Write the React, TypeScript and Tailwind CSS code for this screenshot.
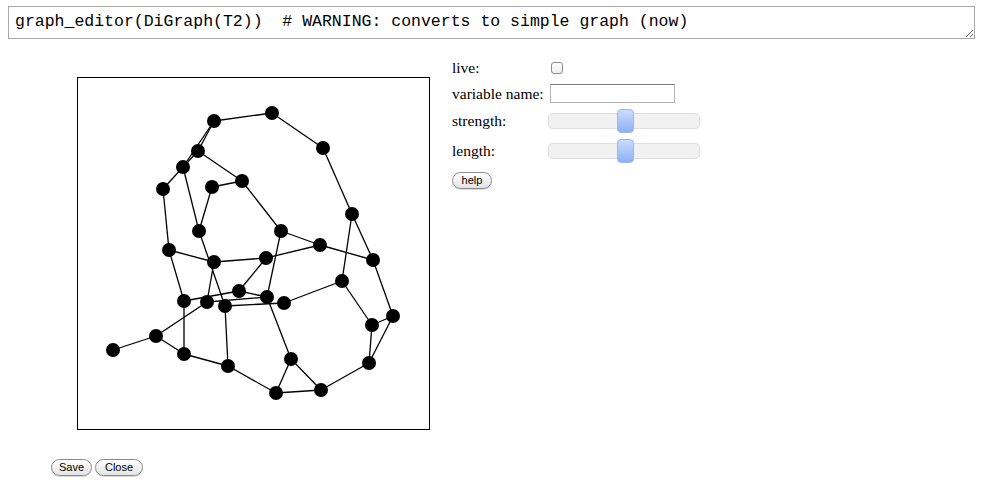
import React from 'react';

type Pt = [number, number];

const nodes: Record<string, Pt> = {
  A: [214, 121], B: [272, 113], C: [323, 148], D: [198, 151], E: [183, 167],
  F: [163, 189], G: [212, 187], H: [242, 181], I: [199, 231], J: [281, 231],
  K: [352, 214], L: [169, 250], M: [214, 262], N: [266, 258], O: [320, 245],
  P: [373, 260], Q: [342, 281], R: [239, 291], S: [184, 301], T: [207, 302],
  U: [225, 306], V: [267, 297], W: [284, 303], X: [393, 316], Y: [372, 325],
  Z: [156, 336], AA: [113, 350], AB: [184, 354], AC: [228, 366], AD: [291, 359],
  AE: [369, 363], AF: [321, 390], AG: [276, 393],
};

const edges: [string, string][] = [
  ['A', 'B'], ['B', 'C'], ['C', 'K'], ['K', 'P'], ['K', 'Q'], ['A', 'D'], ['A', 'E'],
  ['D', 'E'], ['E', 'F'], ['D', 'H'], ['E', 'I'], ['G', 'H'], ['G', 'I'], ['H', 'J'],
  ['J', 'O'], ['J', 'V'], ['O', 'P'], ['N', 'O'], ['F', 'L'], ['L', 'M'], ['L', 'S'],
  ['I', 'U'], ['M', 'T'], ['M', 'N'], ['N', 'R'], ['R', 'V'], ['S', 'R'], ['T', 'V'],
  ['U', 'W'], ['W', 'Q'], ['Q', 'Y'], ['Y', 'X'], ['X', 'P'], ['X', 'AE'], ['Y', 'AE'],
  ['AE', 'AF'], ['AF', 'AD'], ['AF', 'AG'], ['AD', 'AG'], ['V', 'AD'], ['AG', 'AC'],
  ['AC', 'U'], ['AC', 'AB'], ['AB', 'Z'], ['AB', 'S'], ['Z', 'AA'], ['Z', 'T'],
];

function Slider() {
  return (
    <div className="relative w-[152px] h-[16px] rounded-[5px] border border-[#dedede] bg-[#f1f1f1]">
      <div className="absolute left-[68px] top-[-5px] w-[17px] h-[24px] rounded-[4px] border border-[#9db7ee] bg-gradient-to-b from-[#cbdcfd] to-[#8fb0f6]" />
    </div>
  );
}

function PillButton({ label, w }: { label: string; w: string }) {
  return (
    <button
      className={`${w} h-[17px] rounded-full border border-[#8a8a8a] bg-gradient-to-b from-white to-[#e4e4e4] text-[11px] leading-none text-black font-['Liberation_Sans',sans-serif] shadow-[0_1px_0_rgba(0,0,0,0.15)]`}
    >
      {label}
    </button>
  );
}

export default function App() {
  return (
    <div className="w-[984px] h-[491px] bg-white font-['Liberation_Serif',serif] text-black">
      <div className="pt-[6px] pl-[8px] pr-[9px]">
        <textarea
          readOnly
          defaultValue="graph_editor(DiGraph(T2))  # WARNING: converts to simple graph (now)"
          className="block w-full h-[33px] border border-[#a9a9a9] px-[6px] pt-[5px] font-['Liberation_Mono',monospace] text-[16.5px] leading-[20px] text-black outline-none overflow-hidden"
        />
      </div>

      <div className="flex items-start mt-[19px]">
        <div className="ml-[77px] mt-[19px] w-[353px] h-[353px] border border-black">
          <svg width="351" height="351" viewBox="78 78 351 351">
            {edges.map(([a, b], i) => (
              <line
                key={i}
                x1={nodes[a][0]}
                y1={nodes[a][1]}
                x2={nodes[b][0]}
                y2={nodes[b][1]}
                stroke="black"
                strokeWidth={1.3}
              />
            ))}
            {Object.entries(nodes).map(([k, [x, y]]) => (
              <circle key={k} cx={x} cy={y} r={7} fill="black" />
            ))}
          </svg>
        </div>

        <div className="ml-[22px] text-[15.5px] leading-none">
          <div className="flex items-center h-[20px]">
            <span className="w-[99px]">live:</span>
            <span className="w-[12px] h-[12px] rounded-[3px] border border-[#8d8d8d] bg-gradient-to-b from-white to-[#ececec]" />
          </div>
          <div className="flex items-center h-[19px] mt-[6px]">
            <span className="w-[98px]">variable name:</span>
            <span className="w-[125px] h-[19px] border border-[#b5b5b5] border-t-[#7a7a7a] bg-white" />
          </div>
          <div className="flex items-center h-[24px] mt-[6px]">
            <span className="w-[96px]">strength:</span>
            <Slider />
          </div>
          <div className="flex items-center h-[24px] mt-[6px]">
            <span className="w-[96px]">length:</span>
            <Slider />
          </div>
          <div className="mt-[8px]">
            <PillButton label="help" w="w-[40px]" />
          </div>
        </div>
      </div>

      <div className="flex gap-[3px] pl-[51px] mt-[29px]">
        <PillButton label="Save" w="w-[41px]" />
        <PillButton label="Close" w="w-[48px]" />
      </div>
    </div>
  );
}
